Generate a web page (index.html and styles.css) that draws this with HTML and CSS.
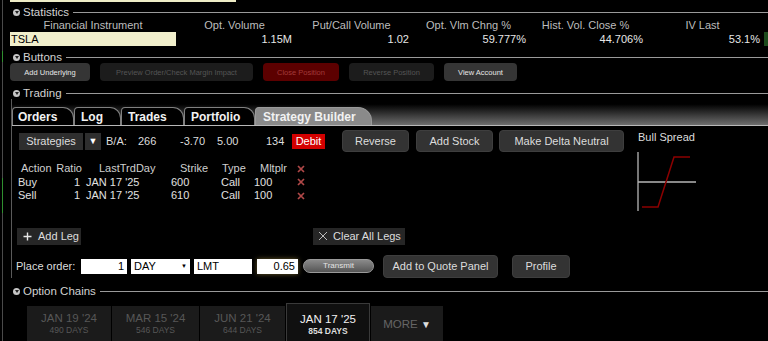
FILE: index.html
```html
<!DOCTYPE html>
<html lang="en">
<head>
  <meta charset="UTF-8" />
  <title>Strategy Builder</title>
  <link rel="stylesheet" href="styles.css">
</head>
<body>
  <div class="prev-row"></div>

  <div class="sec-head stats-head"><span class="bullet"></span>Statistics</div>
  <div class="stats">
    <div class="st-h">Financial Instrument</div>
    <div class="st-h">Opt. Volume</div>
    <div class="st-h">Put/Call Volume</div>
    <div class="st-h">Opt. Vlm Chng %</div>
    <div class="st-h">Hist. Vol. Close %</div>
    <div class="st-h">IV Last</div>
    <div></div>
    <div class="st-sym">TSLA</div>
    <div class="st-v">1.15M</div>
    <div class="st-v">1.02</div>
    <div class="st-v">59.777%</div>
    <div class="st-v">44.706%</div>
    <div class="st-v">53.1%</div>
    <div class="st-flag"></div>
  </div>

  <div class="sec-head buttons-head"><span class="bullet"></span>Buttons</div>
  <div class="btn-row">
    <button class="tb on w-under">Add Underlying</button>
    <button class="tb off w-prev">Preview Order/Check Margin Impact</button>
    <button class="tb close w-close">Close Position</button>
    <button class="tb off w-rev">Reverse Position</button>
    <button class="tb on w-view">View Account</button>
  </div>

  <div class="sec-head trading-head"><span class="bullet"></span>Trading</div>
  <div class="trading">
    <div class="tabstrip">
      <div class="tab t-orders">Orders</div>
      <div class="tab t-log">Log</div>
      <div class="tab t-trades">Trades</div>
      <div class="tab t-port">Portfolio</div>
      <div class="tab active t-sb">Strategy Builder</div>
    </div>

    <div class="trade-body">
      <div class="main-col">
        <div class="strat-row">
          <div class="strat-btn">Strategies</div>
          <div class="strat-drop">&#9660;</div>
          <span class="q q-ba">B/A:</span>
          <span class="q q-bid">266</span>
          <span class="q q-chg">-3.70</span>
          <span class="q q-ask">5.00</span>
          <span class="q q-sz">134</span>
          <span class="debit">Debit</span>
          <button class="dbtn w-reverse">Reverse</button>
          <button class="dbtn w-stock">Add Stock</button>
          <button class="dbtn w-delta">Make Delta Neutral</button>
        </div>

        <div class="legs">
          <div class="leg hd">
            <span class="c1">Action</span><span class="c2">Ratio</span><span class="c3">LastTrdDay</span><span class="c4">Strike</span><span class="c5">Type</span><span class="c6">Mltplr</span><span class="c7"><svg class="x" width="8" height="8" viewBox="0 0 8 8"><path d="M1 1L7 7M7 1L1 7"/></svg></span>
          </div>
          <div class="leg">
            <span class="c1">Buy</span><span class="c2">1</span><span class="c3">JAN 17 '25</span><span class="c4">600</span><span class="c5">Call</span><span class="c6">100</span><span class="c7"><svg class="x" width="8" height="8" viewBox="0 0 8 8"><path d="M1 1L7 7M7 1L1 7"/></svg></span>
          </div>
          <div class="leg">
            <span class="c1">Sell</span><span class="c2">1</span><span class="c3">JAN 17 '25</span><span class="c4">610</span><span class="c5">Call</span><span class="c6">100</span><span class="c7"><svg class="x" width="8" height="8" viewBox="0 0 8 8"><path d="M1 1L7 7M7 1L1 7"/></svg></span>
          </div>
        </div>

        <div class="leg-actions">
          <div class="ghost add-leg">
            <svg width="9" height="9" viewBox="0 0 9 9"><path d="M4.5 0.5V8.5M0.5 4.5H8.5"/></svg>
            Add Leg
          </div>
          <div class="ghost clear-legs">
            <svg width="10" height="10" viewBox="0 0 10 10"><path d="M1 1L9 9M9 1L1 9"/></svg>
            Clear All Legs
          </div>
        </div>

        <div class="order-row">
          <span class="order-lbl">Place order:</span>
          <span class="field f-qty">1</span>
          <span class="field f-tif">DAY<span class="caret">&#9660;</span></span>
          <span class="field f-type">LMT</span>
          <span class="field f-px">0.65</span>
          <span class="transmit">Transmit</span>
          <button class="dbtn w-quote">Add to Quote Panel</button>
          <button class="dbtn w-prof">Profile</button>
        </div>
      </div>

      <div class="side-col">
        <div class="side-title">Bull Spread</div>
        <svg class="payoff" width="64" height="64" viewBox="0 0 64 64">
          <path class="axis" d="M2 2V61M2 32H60"/>
          <path class="pl" d="M6 57H22L38 7H54"/>
        </svg>
      </div>
    </div>
  </div>

  <div class="sec-head chains-head"><span class="bullet"></span>Option Chains</div>
  <div class="expiries">
    <div class="exp w1"><div class="d">JAN 19 '24</div><div class="n">490 DAYS</div></div>
    <div class="exp w2"><div class="d">MAR 15 '24</div><div class="n">546 DAYS</div></div>
    <div class="exp w3"><div class="d">JUN 21 '24</div><div class="n">644 DAYS</div></div>
    <div class="exp cur w4"><div class="d">JAN 17 '25</div><div class="n">854 DAYS</div></div>
    <div class="exp more w5">MORE <span class="more-caret">&#9660;</span></div>
  </div>
</body>
</html>
```

FILE: styles.css
```css
* { box-sizing: border-box; }
html, body { margin: 0; }
body {
  width: 768px; height: 341px; overflow: hidden;
  font-family: "Liberation Sans", Arial, sans-serif; font-size: 11px; color: #ddd;
  background-color: #000;
  background-image: linear-gradient(#4a4a4a 0, #4a4a4a 51px, #2f8f2f 51px, #2f8f2f 62px, #4a4a4a 62px, #4a4a4a 178px, #2f8f2f 178px, #2f8f2f 213px, #4a4a4a 213px);
  background-size: 1px 100%; background-position: 2px 0; background-repeat: no-repeat;
}
button { font-family: inherit; margin: 0; padding: 0; cursor: pointer; }

.prev-row { margin-left: 10px; width: 226px; height: 2px; background: #eeecc6; }

/* section headers */
.sec-head { display: flex; align-items: center; height: 12px; margin-left: 13px; font-size: 11.5px; color: #d2d2d2; }
.sec-head::after { content: ""; flex: 1; height: 1px; background: #9a9a9a; margin-left: 4px; }
.bullet { width: 7px; height: 7px; border-radius: 50%; background: #c6c6c6; margin-right: 3px; display: flex; align-items: center; justify-content: center; }
.bullet::after { content: ""; border-left: 2px solid transparent; border-right: 2px solid transparent; border-top: 3px solid #222; }
.stats-head { margin-top: 4px; }
.buttons-head { margin-top: 5px; }
.trading-head { margin-top: 6px; }
.chains-head { margin-top: 7px; }

/* statistics */
.stats { display: grid; grid-template-columns: 166px repeat(5, 117px) 7px; grid-template-rows: 12px 14px; row-gap: 1px; margin: 1px 0 0 10px; }
.st-h { text-align: center; line-height: 13px; color: #bdbdbd; }
.st-v { text-align: right; padding-right: 1px; line-height: 14px; color: #e6e6e6; }
.st-sym { background: #f1efcc; color: #000; line-height: 14px; padding-left: 1px; }
.st-flag { margin-left: 3px; background: #1c4a1c; }

/* toolbar buttons */
.btn-row { display: flex; gap: 10px; height: 18px; margin-left: 10px; }
.tb { border: none; border-radius: 4px; font-size: 7.5px; height: 18px; }
.tb.on { background: #353535; color: #e6e6e6; }
.tb.off { background: #1c1c1c; color: #555; }
.tb.close { background: #5c0000; color: #a33a3a; }
.w-under { width: 80px; }
.w-prev { width: 153px; }
.w-close { width: 76px; }
.w-rev { width: 85px; }
.w-view { width: 73px; }

/* trading panel */
.trading { margin-left: 11px; border-left: 1px solid #5a5a5a; }
.tabstrip { height: 27px; display: flex; align-items: flex-end; border-bottom: 1px solid #b8b8b8; background: linear-gradient(#000 0, #000 20%, #6e6e6e 100%); }
.tab { height: 18px; line-height: 18px; font-size: 12px; font-weight: bold; color: #f2f2f2; background: #000; border: 1px solid #808080; border-bottom: none; border-radius: 4px 11px 0 0; padding-left: 5px; }
.tab.active { background: #8a8a8a; border-color: #9a9a9a; border-radius: 4px 14px 0 0; padding-left: 7px; }
.t-orders { width: 62px; }
.t-log { width: 47px; padding-left: 6px; }
.t-trades { width: 63px; padding-left: 6px; }
.t-port { width: 71px; padding-left: 6px; }
.t-sb { width: 117px; }

.trade-body { display: flex; height: 152px; }
.main-col { width: 626px; padding-top: 4px; }
.side-col { padding-top: 5px; }

.strat-row { display: flex; align-items: center; height: 22px; }
.strat-btn { margin-left: 7px; width: 64px; height: 17px; line-height: 17px; text-align: center; background: #2e2e2e; color: #ddd; }
.strat-drop { margin-left: 2px; width: 16px; height: 17px; line-height: 17px; text-align: center; background: #2e2e2e; color: #fff; font-size: 9px; }
.q { display: inline-block; color: #ddd; }
.q-ba { margin-left: 5px; width: 32px; }
.q-bid { width: 42px; }
.q-chg { width: 37px; }
.q-ask { width: 49px; }
.q-sz { width: 26px; }
.debit { background: #d30000; color: #fff; height: 15px; line-height: 15px; width: 33px; text-align: center; }

.dbtn { height: 22px; background: #333; border: 1px solid #3e3e3e; border-radius: 4px; color: #ddd; font-size: 11px; }
.w-reverse { margin-left: 17px; width: 67px; }
.w-stock { margin-left: 7px; width: 77px; }
.w-delta { margin-left: 6px; width: 125px; }

/* legs */
.legs { margin: 10px 0 0 5px; }
.leg { display: flex; height: 13.5px; line-height: 13.5px; color: #e0e0e0; }
.leg.hd { color: #cfcfcf; }
.leg span { display: block; white-space: nowrap; }
.c1 { width: 38px; padding-left: 1px; }
.c2 { width: 28px; text-align: right; padding-right: 3px; }
.c3 { width: 77px; padding-left: 3px; }
.c4 { width: 55px; padding-left: 11px; }
.c5 { width: 37px; padding-left: 6px; }
.c6 { width: 40px; padding-left: 2px; }
.c7 { width: 18px; display: flex !important; align-items: center; justify-content: center; height: 13.5px; }
.hd .c1 { padding-left: 4px; }
.hd .c2 { padding-right: 1px; }
.hd .c3 { padding-left: 16px; }
.hd .c4 { padding-left: 20px; }
.hd .c5 { padding-left: 7px; }
.hd .c6 { padding-left: 8px; }
.x path { stroke: #b04848; stroke-width: 1.7; }

.leg-actions { display: flex; margin: 25px 0 0 5px; height: 17px; }
.ghost { display: flex; align-items: center; gap: 6px; height: 17px; background: #262626; color: #ddd; padding-left: 6px; }
.ghost svg path { stroke: #e6e6e6; stroke-width: 1.4; fill: none; }
.add-leg { width: 64px; }
.clear-legs { margin-left: 232px; width: 92px; padding-left: 5px; gap: 5px; }
.clear-legs svg path { stroke: #bbb; stroke-width: 1; }

.order-row { display: flex; align-items: center; height: 23px; margin-top: 10px; }
.order-lbl { margin-left: 4px; width: 65px; color: #ddd; }
.field { display: flex; align-items: center; height: 15px; background: #fff; color: #000; padding: 0 3px; }
.f-qty { width: 46px; justify-content: flex-end; }
.f-tif { width: 59px; margin-left: 4px; justify-content: space-between; }
.caret { font-size: 6px; }
.f-type { width: 58px; margin-left: 4px; }
.f-px { width: 41px; margin-left: 5px; justify-content: flex-end; box-shadow: 0 0 5px rgba(230, 200, 90, 0.45); }
.transmit { margin-left: 5px; width: 71px; height: 14px; line-height: 12px; text-align: center; font-size: 8px; color: #e4e4e4; border: 1px solid #9a9a9a; border-radius: 7px; background: linear-gradient(#8a8a8a, #555); }
.w-quote { margin-left: 9px; width: 115px; height: 23px; }
.w-prof { margin-left: 14px; width: 58px; height: 23px; }

.side-title { line-height: 12px; color: #ddd; }
.payoff { display: block; margin: 7px 0 0 -2px; }
.payoff .axis { stroke: #b5b5b5; stroke-width: 1.3; fill: none; }
.payoff .pl { stroke: #8c0000; stroke-width: 1.5; fill: none; }

/* option chains */
.expiries { display: flex; align-items: flex-start; gap: 1px; margin: 6px 0 0 27px; height: 40px; }
.exp { margin-top: 3px; height: 40px; background: #1b1b1b; text-align: center; color: #575757; padding-top: 6px; }
.exp .d { font-size: 11.5px; line-height: 13px; }
.exp .n { font-size: 8.5px; line-height: 11px; }
.exp.cur { margin-top: 0; height: 40px; padding-top: 9px; background: #101010; border: 1px solid #3a3a3a; border-bottom: none; color: #f0f0f0; }
.exp.cur .n { font-weight: bold; color: #ddd; }
.exp.more { font-size: 11.5px; color: #666; padding-top: 12px; }
.more-caret { color: #ddd; font-size: 10px; }
.w1 { width: 84px; }
.w2 { width: 87px; }
.w3 { width: 85px; }
.w4 { width: 84px; }
.w5 { width: 72px; }
```
